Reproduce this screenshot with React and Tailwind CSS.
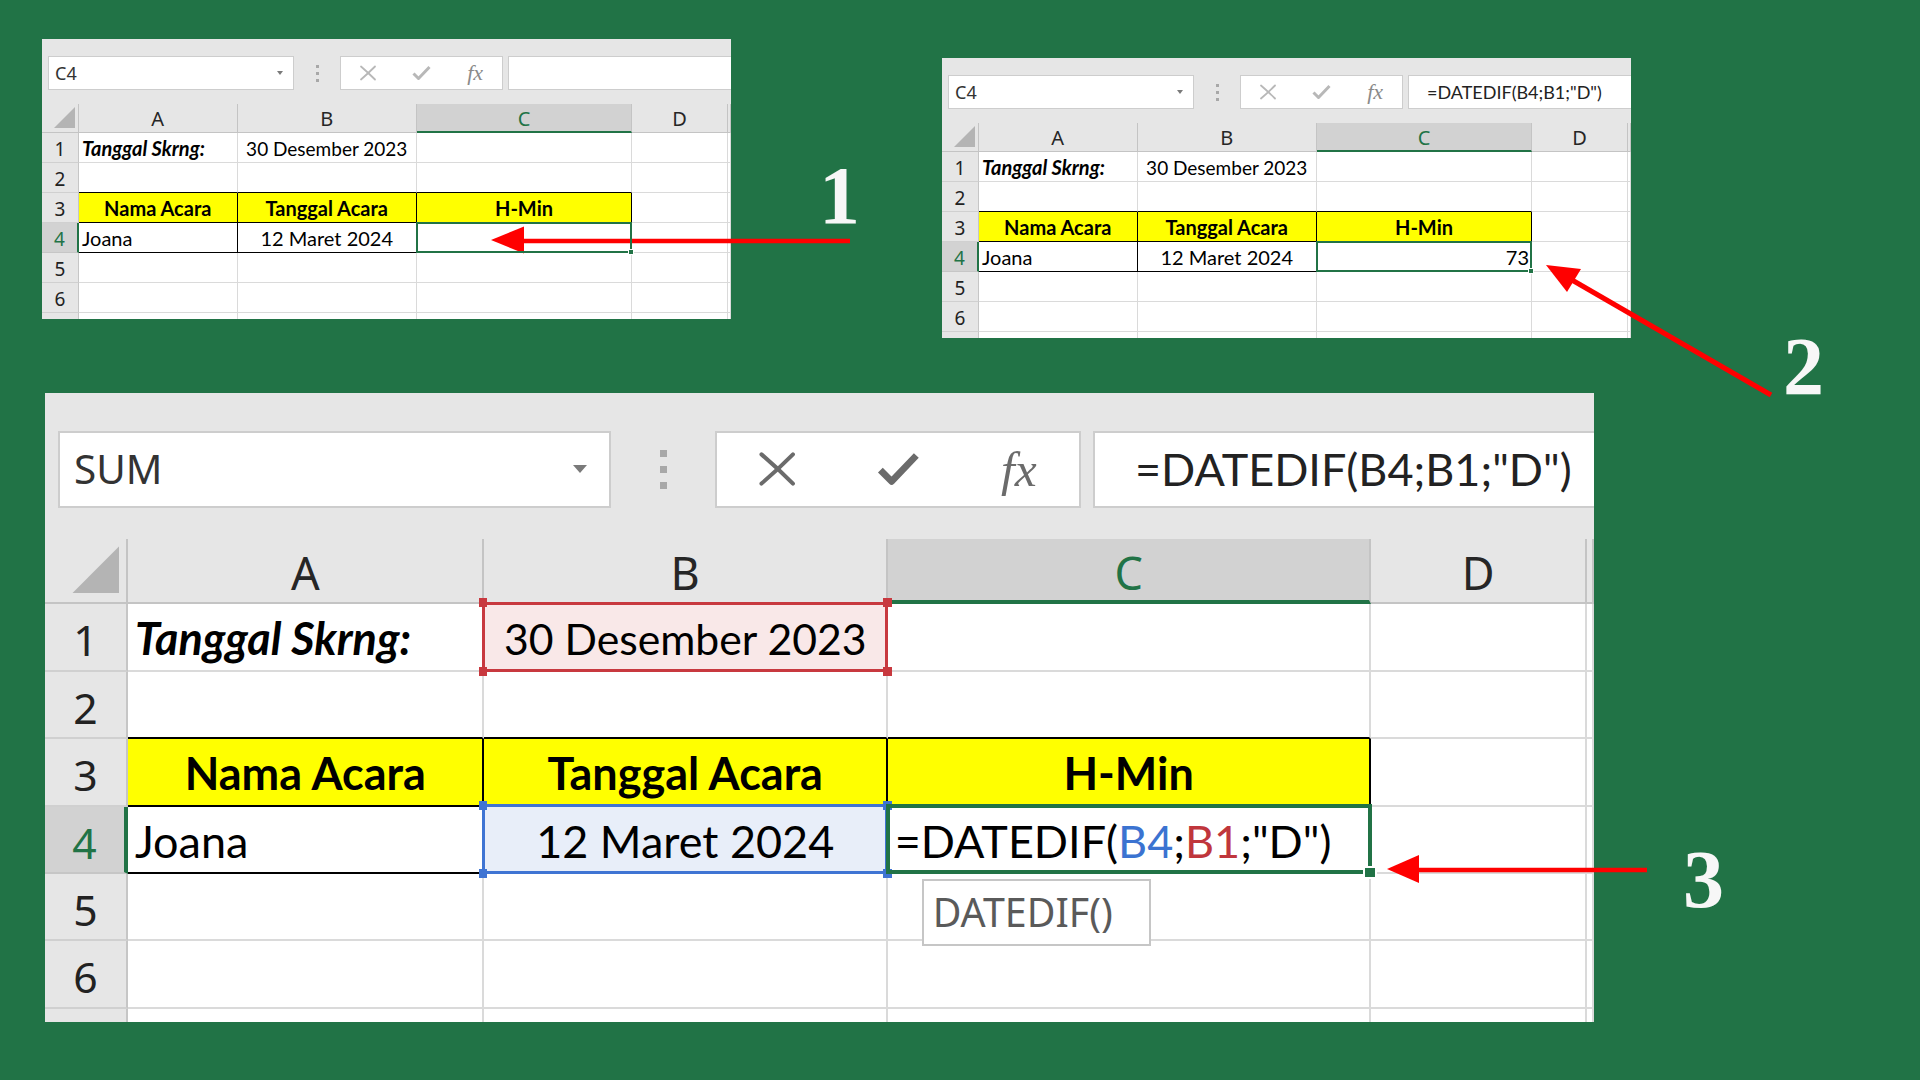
import React from 'react';

const UI = "[font-family:'Noto_Sans',sans-serif]";
const CAL = "[font-family:Lato,sans-serif]";
const SERIF = "[font-family:'Liberation_Serif',serif]";

const GRID = 'border-r border-b border-[#dadada]';
const TBL = 'border-r border-b border-black';
const ABOVE_TBL = 'border-r border-r-[#dadada] border-b border-b-black';

function Corners({ color }) {
  return (
    <>
      <span className={`absolute left-[-3px] top-[-3px] w-[4px] h-[4px] ${color}`} />
      <span className={`absolute right-[-3px] top-[-3px] w-[4px] h-[4px] ${color}`} />
      <span className={`absolute left-[-3px] bottom-[-3px] w-[4px] h-[4px] ${color}`} />
      <span className={`absolute right-[-3px] bottom-[-3px] w-[4px] h-[4px] ${color}`} />
    </>
  );
}

function RefBox({ line, dot }) {
  return (
    <div className={`absolute inset-[-1px] border-[1.5px] z-10 pointer-events-none ${line}`}>
      <Corners color={dot} />
    </div>
  );
}

function Selected() {
  return (
    <div className="absolute inset-[-1px] border-2 border-[#217346] z-10 pointer-events-none">
      <span className="absolute right-[-4px] bottom-[-4px] w-[6px] h-[6px] bg-[#217346] border border-white" />
    </div>
  );
}

function Cell({ w, b = GRID, bg = 'bg-white', size = 'text-[20px]', className = '', children }) {
  return (
    <div className={`relative h-full shrink-0 whitespace-nowrap text-black leading-[31px] ${CAL} ${w} ${b} ${bg} ${size} ${className}`}>
      {children}
    </div>
  );
}

function Row({ n, active, children }) {
  return (
    <div className="flex h-[30px] shrink-0">
      <div
        className={`w-[37px] shrink-0 text-center text-[19px] leading-[32px] ${UI} ${
          active
            ? 'bg-[#d2d2d2] text-[#217346] border-r-2 border-r-[#217346] border-b border-b-[#c6c6c6]'
            : 'bg-[#e6e6e6] text-[#222] border-r border-r-[#c6c6c6] border-b border-b-[#d0d0d0]'
        }`}
      >
        {n}
      </div>
      {children}
    </div>
  );
}

function Head({ w, active, children }) {
  return (
    <div
      className={`shrink-0 text-center text-[20px] ${UI} ${w} ${
        active
          ? 'bg-[#d2d2d2] text-[#217346] border-r border-r-[#c4c4c4] border-b-2 border-b-[#217346] leading-[30px]'
          : 'bg-[#e6e6e6] text-[#262626] border-r border-b border-[#c4c4c4] leading-[30px]'
      }`}
    >
      {children}
    </div>
  );
}

function BlankRow({ n, tooltip }) {
  return (
    <Row n={n}>
      <Cell w="w-[158.5px]" />
      <Cell w="w-[179.5px]" />
      <Cell w="w-[215px]">
        {tooltip && (
          <div className={`absolute left-[15px] top-[2px] w-[102px] h-[30px] z-20 bg-white border border-[#c6c6c6] px-[4px] text-[17.5px] leading-[28px] text-[#5a5a5a] ${UI}`}>
            DATEDIF()
          </div>
        )}
      </Cell>
      <Cell w="w-[96px]" />
      <Cell w="flex-1" />
    </Row>
  );
}

function Sheet({ name, formula, formulaSize = 'text-[18px]', editing, c4, b1Ref, b4Ref, tooltip }) {
  const btn = editing ? 'text-[#6b6b6b]' : 'text-[#b8b8b8]';
  const fx = editing ? 'text-[#6b6b6b]' : 'text-[#8a8a8a]';
  return (
    <div className="w-[689px] h-[280px] bg-[#e6e6e6] overflow-hidden flex flex-col">
      {/* formula bar */}
      <div className="flex items-start h-[65px] pt-[17px] pl-[6px] shrink-0">
        <div className="w-[246px] h-[34px] bg-white border border-[#cdcdcd] flex items-center justify-between pl-[6px] pr-[10px]">
          <span className={`text-[18px] text-[#333] ${UI}`}>{name}</span>
          <span className="w-0 h-0 border-x-[3.5px] border-x-transparent border-t-[4px] border-t-[#7a7a7a]" />
        </div>
        <div className="w-[46px] h-[34px] flex flex-col items-center justify-center gap-[4px]">
          <span className="w-[3px] h-[3px] bg-[#a8a8a8]" />
          <span className="w-[3px] h-[3px] bg-[#a8a8a8]" />
          <span className="w-[3px] h-[3px] bg-[#a8a8a8]" />
        </div>
        <div className="w-[163px] h-[34px] bg-white border border-[#cdcdcd] flex items-center">
          <div className={`w-[55px] flex justify-center ${btn}`}>
            <svg width="18" height="16" viewBox="0 0 18 16" fill="none" stroke="currentColor" strokeWidth="1.8" strokeLinecap="round">
              <path d="M2 1.5 Q9 7.5 16 14.5" />
              <path d="M16 1.5 Q9 8.5 2 14.5" />
            </svg>
          </div>
          <div className={`w-[55px] flex justify-center ${btn}`}>
            <svg width="19" height="16" viewBox="0 0 19 16" fill="none" stroke="currentColor" strokeWidth="3" strokeLinejoin="round">
              <path d="M1.5 8.5 L6.5 13.5 L17.5 2" />
            </svg>
          </div>
          <div className={`w-[55px] flex justify-center italic text-[22px] leading-[30px] ${SERIF} ${fx}`}>fx</div>
        </div>
        <div className={`flex-1 h-[34px] ml-[5px] bg-white border-y border-l border-[#cdcdcd] pl-[18px] flex items-center whitespace-nowrap text-[#222] ${CAL} ${formulaSize}`}>
          {formula}
        </div>
      </div>

      {/* column headers */}
      <div className="flex h-[29px] shrink-0">
        <div className="relative w-[37px] shrink-0 border-r border-b border-[#c4c4c4] bg-[#e6e6e6]">
          <span className="absolute right-[3px] bottom-[4px] w-[21px] h-[21px] bg-[#b4b4b4] [clip-path:polygon(100%_0,100%_100%,0_100%)]" />
        </div>
        <Head w="w-[158.5px]">A</Head>
        <Head w="w-[179.5px]">B</Head>
        <Head w="w-[215px]" active>C</Head>
        <Head w="w-[96px]">D</Head>
        <Head w="flex-1" />
      </div>

      <Row n="1">
        <Cell w="w-[158.5px]" className="pl-[3px] font-bold italic">Tanggal Skrng:</Cell>
        <Cell w="w-[179.5px]" bg={b1Ref ? 'bg-[#f9e8e8]' : 'bg-white'} size="text-[19px]" className="text-center">
          30 Desember 2023
          {b1Ref && <RefBox line="border-[#c8393f]" dot="bg-[#c8393f]" />}
        </Cell>
        <Cell w="w-[215px]" />
        <Cell w="w-[96px]" />
        <Cell w="flex-1" />
      </Row>

      <Row n="2">
        <Cell w="w-[158.5px]" b={ABOVE_TBL} />
        <Cell w="w-[179.5px]" b={ABOVE_TBL} />
        <Cell w="w-[215px]" b={ABOVE_TBL} />
        <Cell w="w-[96px]" />
        <Cell w="flex-1" />
      </Row>

      <Row n="3">
        <Cell w="w-[158.5px]" b={TBL} bg="bg-[#ffff00]" className="text-center font-bold">Nama Acara</Cell>
        <Cell w="w-[179.5px]" b={TBL} bg="bg-[#ffff00]" className="text-center font-bold">Tanggal Acara</Cell>
        <Cell w="w-[215px]" b={TBL} bg="bg-[#ffff00]" className="text-center font-bold">H-Min</Cell>
        <Cell w="w-[96px]" />
        <Cell w="flex-1" />
      </Row>

      <Row n="4" active>
        <Cell w="w-[158.5px]" b={TBL} className="pl-[3px]">Joana</Cell>
        <Cell w="w-[179.5px]" b={TBL} bg={b4Ref ? 'bg-[#e8eef9]' : 'bg-white'} className="text-center">
          12 Maret 2024
          {b4Ref && <RefBox line="border-[#3f74d3]" dot="bg-[#3f74d3]" />}
        </Cell>
        <Cell w="w-[215px]" b={TBL}>
          {c4}
          <Selected />
        </Cell>
        <Cell w="w-[96px]" />
        <Cell w="flex-1" />
      </Row>

      <BlankRow n="5" tooltip={tooltip} />
      <BlankRow n="6" />
      {/* row 7 only peeks in at the bottom edge */}
      <BlankRow n="" />
    </div>
  );
}

const FORMULA = '=DATEDIF(B4;B1;"D")';

export default function App() {
  return (
    <div className="relative w-[1920px] h-[1080px] overflow-hidden bg-[#217346]">
      <div className="flex items-start pt-[39px] pl-[42px]">
        <Sheet name="C4" />
        <div className="ml-[211px] mt-[19px]">
          <Sheet
            name="C4"
            formula={FORMULA}
            c4={<div className="text-right pr-[2px]">73</div>}
          />
        </div>
      </div>

      <div className="ml-[45px] mt-[55px]">
        <div className="w-[689px] [zoom:2.248]">
          <Sheet
            name="SUM"
            editing
            formula={FORMULA}
            formulaSize="text-[20px]"
            b1Ref
            b4Ref
            tooltip
            c4={
              <div className="pl-[3px]">
                =DATEDIF(<span className="text-[#3b73d1]">B4</span>;<span className="text-[#c0363c]">B1</span>;"D")
              </div>
            }
          />
        </div>
      </div>

      {/* callout arrows */}
      <svg className="absolute inset-0 pointer-events-none" width="1920" height="1080" viewBox="0 0 1920 1080">
        <line x1="518" y1="241" x2="850" y2="241" stroke="#ff0000" strokeWidth="4.5" />
        <polygon points="491,240 524,226.5 524,253.5" fill="#ff0000" />
        <line x1="1572" y1="280" x2="1771" y2="395" stroke="#ff0000" strokeWidth="5" />
        <polygon points="1546,265 1581,269 1567,292" fill="#ff0000" />
        <line x1="1416" y1="870" x2="1647" y2="870" stroke="#ff0000" strokeWidth="4.5" />
        <polygon points="1387,869 1419,855 1419,883" fill="#ff0000" />
      </svg>

      <div className={`absolute left-[819px] top-[155px] text-[82px] leading-none font-bold text-[#f7f7f7] ${SERIF}`}>1</div>
      <div className={`absolute left-[1783px] top-[326px] text-[82px] leading-none font-bold text-[#f7f7f7] ${SERIF}`}>2</div>
      <div className={`absolute left-[1683px] top-[839px] text-[82px] leading-none font-bold text-[#f7f7f7] ${SERIF}`}>3</div>
    </div>
  );
}
